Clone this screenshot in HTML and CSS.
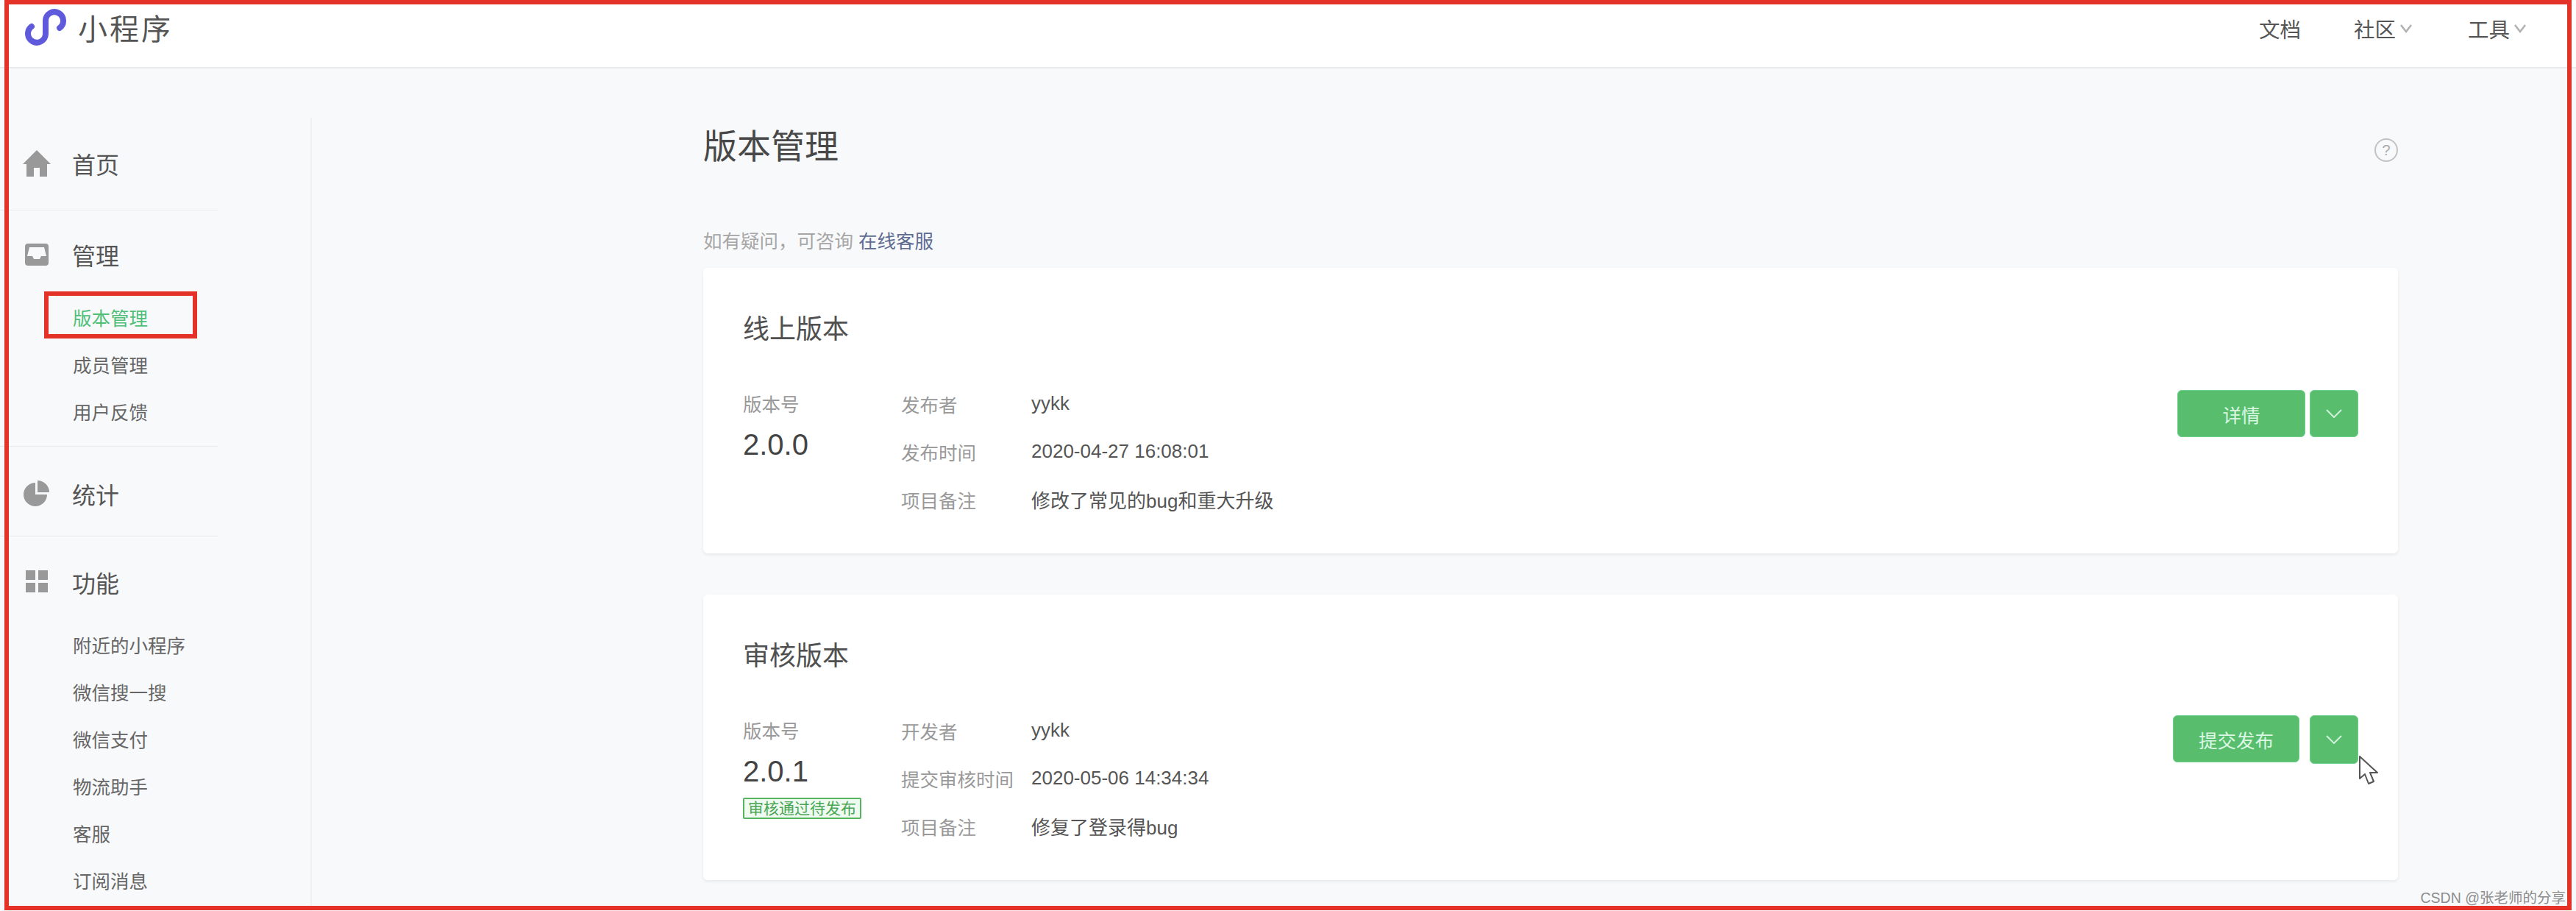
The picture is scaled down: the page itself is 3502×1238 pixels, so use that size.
FILE: index.html
```html
<!DOCTYPE html>
<html lang="zh-CN">
<head>
    <meta charset="UTF-8">
    <title>小程序 - 版本管理</title>
    <link rel="stylesheet" href="styles.css">
</head>
<body>
    <header class="header">
        <div class="brand">
            <svg class="brand-logo" viewBox="0 0 56 50" width="56" height="50">
                <path d="M9 24A12 12 0 1 0 28 34V16A12 12 0 1 1 47 26" fill="none" stroke="#5f59dc" stroke-width="8" stroke-linecap="round"/>
            </svg>
            <span class="brand-name">小程序</span>
        </div>
        <nav class="top-nav">
            <a class="top-link">文档</a>
            <a class="top-link">社区
                <svg class="top-caret" viewBox="0 0 16 12" width="16" height="12"><path d="M1 1l7 9 7-9" fill="none" stroke="#b0b0b0" stroke-width="2.5"/></svg>
            </a>
            <a class="top-link">工具
                <svg class="top-caret" viewBox="0 0 16 12" width="16" height="12"><path d="M1 1l7 9 7-9" fill="none" stroke="#b0b0b0" stroke-width="2.5"/></svg>
            </a>
        </nav>
    </header>

    <div class="layout">
        <aside class="sidebar">
            <div class="nav-group nav-group-first">
                <div class="nav-head">
                    <svg class="nav-icon" viewBox="0 0 38 36"><path d="M19 0L38 19H33V36H23V24H15V36H5V19H0Z" fill="#999"/></svg>
                    首页
                </div>
            </div>
            <div class="nav-group nav-group-sub">
                <div class="nav-head">
                    <svg class="nav-icon" viewBox="0 0 38 36"><path d="M7 3H31Q35 3 35 7V29Q35 33 31 33H7Q3 33 3 29V7Q3 3 7 3ZM9 8L6 20H13L15 24H23L25 20H32L29 8Z" fill="#999" fill-rule="evenodd"/></svg>
                    管理
                </div>
                <ul class="sub-list">
                    <li class="sub-item active">版本管理</li>
                    <li class="sub-item">成员管理</li>
                    <li class="sub-item">用户反馈</li>
                </ul>
            </div>
            <div class="nav-group nav-group-stats">
                <div class="nav-head">
                    <svg class="nav-icon" viewBox="0 0 38 36"><path d="M20 0A16 16 0 0 1 36 16H20ZM17 3V19H33A16 16 0 1 1 17 3Z" fill="#999"/></svg>
                    统计
                </div>
            </div>
            <div class="nav-group nav-group-last">
                <div class="nav-head">
                    <svg class="nav-icon" viewBox="0 0 38 36"><path d="M4 2H17V15H4ZM21 2H34V15H21ZM4 19H17V32H4ZM21 19H34V32H21Z" fill="#999"/></svg>
                    功能
                </div>
                <ul class="sub-list">
                    <li class="sub-item">附近的小程序</li>
                    <li class="sub-item">微信搜一搜</li>
                    <li class="sub-item">微信支付</li>
                    <li class="sub-item">物流助手</li>
                    <li class="sub-item">客服</li>
                    <li class="sub-item">订阅消息</li>
                </ul>
            </div>
        </aside>

        <main class="main">
            <div class="page-head">
                <h1 class="page-title">版本管理</h1>
                <span class="help">?</span>
            </div>
            <p class="hint">如有疑问，可咨询 <a class="hint-link">在线客服</a></p>

            <section class="card">
                <h2 class="card-title">线上版本</h2>
                <div class="card-body">
                    <div class="version">
                        <div class="version-label">版本号</div>
                        <div class="version-num">2.0.0</div>
                    </div>
                    <dl class="info">
                        <dt>发布者</dt><dd>yykk</dd>
                        <dt>发布时间</dt><dd>2020-04-27 16:08:01</dd>
                        <dt>项目备注</dt><dd>修改了常见的bug和重大升级</dd>
                    </dl>
                    <div class="actions">
                        <button class="btn btn-detail">详情</button>
                        <button class="btn btn-more">
                            <svg viewBox="0 0 22 12" width="22" height="12"><path d="M1 1l10 10L21 1" fill="none" stroke="#cff3da" stroke-width="2"/></svg>
                        </button>
                    </div>
                </div>
            </section>

            <section class="card">
                <h2 class="card-title">审核版本</h2>
                <div class="card-body">
                    <div class="version">
                        <div class="version-label">版本号</div>
                        <div class="version-num">2.0.1</div>
                        <span class="badge">审核通过待发布</span>
                    </div>
                    <dl class="info">
                        <dt>开发者</dt><dd>yykk</dd>
                        <dt>提交审核时间</dt><dd>2020-05-06 14:34:34</dd>
                        <dt>项目备注</dt><dd>修复了登录得bug</dd>
                    </dl>
                    <div class="actions actions-wide">
                        <button class="btn btn-submit">提交发布</button>
                        <button class="btn btn-more btn-more-tall">
                            <svg viewBox="0 0 22 12" width="22" height="12"><path d="M1 1l10 10L21 1" fill="none" stroke="#cff3da" stroke-width="2"/></svg>
                        </button>
                    </div>
                </div>
            </section>
        </main>
    </div>

    <!-- annotations drawn over the screenshot -->
    <div class="mark mark-page"></div>
    <div class="mark mark-item"></div>
    <svg class="cursor" viewBox="0 0 26 40" width="26" height="40">
        <path d="M1 1V31L8 25L13 38L20 35L15 23H25Z" fill="#fff" stroke="#555" stroke-width="2" stroke-linejoin="round"/>
    </svg>
    <div class="watermark">CSDN @张老师的分享</div>
</body>
</html>
```

FILE: styles.css
```css
* {
    box-sizing: border-box;
}

body {
    position: relative;
    width: 3502px;
    height: 1238px;
    margin: 0;
    overflow: hidden;
    font-family: "Liberation Sans", "Noto Sans CJK SC", sans-serif;
    font-size: 26px;
    color: #555;
    background-color: #f8f9fb;
}

.header {
    display: flex;
    justify-content: space-between;
    align-items: center;
    height: 93px;
    padding: 0 68px 14px 34px;
    background-color: #fff;
    border-bottom: 2px solid #e8e9ea;
}

.brand {
    display: flex;
    align-items: center;
    gap: 16px;
    margin-top: -4px;
}

.brand-name {
    font-size: 40px;
    letter-spacing: 3px;
    color: #555;
}

.top-nav {
    display: flex;
    align-items: center;
    gap: 76px;
}

.top-link {
    display: flex;
    align-items: center;
    gap: 6px;
    font-size: 28.5px;
    color: #555;
}

.top-link:first-child {
    margin-right: -4px;
}

.layout {
    display: flex;
    height: 1145px;
}

.sidebar {
    width: 424px;
    height: 1078px;
    margin-top: 67px;
    border-right: 2px solid #f0f1f3;
}

.nav-group {
    width: 296px;
    padding: 28px 0 24px;
    border-bottom: 1px solid #e9eaec;
}

.nav-group-first {
    padding: 30px 0 31px;
}

.nav-group-sub {
    padding-bottom: 13px;
}

.nav-group-stats {
    padding: 32px 0 25px;
}

.nav-group-last {
    padding-top: 30px;
    border-bottom: none;
}

.nav-head {
    display: flex;
    align-items: center;
    height: 64px;
    padding-left: 31px;
    font-size: 32px;
    color: #555;
}

.nav-icon {
    width: 38px;
    height: 36px;
    margin-right: 29px;
}

.sub-list {
    margin: 23px 0 0;
    padding: 0 0 0 99px;
    list-style: none;
}

.sub-item {
    height: 64px;
    line-height: 64px;
    font-size: 25.5px;
    white-space: nowrap;
    color: #666;
}

.sub-item.active {
    color: #4fbf78;
}

.main {
    width: 2304px;
    margin-left: 532px;
}

.page-head {
    display: flex;
    justify-content: space-between;
    align-items: center;
    height: 60px;
    margin-top: 72px;
}

.page-title {
    margin: 0;
    font-size: 46px;
    font-weight: 400;
    color: #484848;
}

.help {
    width: 32px;
    height: 32px;
    border: 2px solid #c2c2c2;
    border-radius: 50%;
    font-size: 20px;
    line-height: 28px;
    text-align: center;
    color: #aaa;
    transform: translate(0, 9px);
}

.hint {
    margin: 85px 0 0;
    height: 36px;
    line-height: 36px;
    font-size: 25.5px;
    color: #a6a6a6;
}

.hint-link {
    color: #5e6b92;
}

.card {
    height: 388px;
    margin: 18px 0 56px;
    padding: 54px 54px 0;
    background-color: #fff;
    border-radius: 6px;
    box-shadow: 0 2px 4px rgba(0, 0, 0, 0.07);
}

.card:last-child {
    margin-bottom: 0;
}

.card-title {
    margin: 0;
    height: 60px;
    line-height: 60px;
    font-size: 36px;
    font-weight: 400;
    color: #505050;
}

.card-body {
    display: flex;
    margin-top: 40px;
}

.version {
    width: 215px;
}

.version-label {
    height: 65px;
    line-height: 65px;
    font-size: 25.5px;
    color: #999;
}

.version-num {
    height: 42px;
    line-height: 42px;
    font-size: 40px;
    color: #444;
}

.badge {
    display: block;
    width: 161px;
    height: 29px;
    margin-top: 15px;
    border: 2px solid #56b45f;
    border-radius: 2px;
    background-color: #effaf0;
    font-size: 21px;
    line-height: 25px;
    text-align: center;
    white-space: nowrap;
    color: #4aa655;
}

.info {
    display: grid;
    grid-template-columns: 177px auto;
    grid-auto-rows: 65px;
    align-items: center;
    margin: -2px 0 0;
}

.info dt {
    font-size: 25.5px;
    white-space: nowrap;
    color: #999;
}

.info dd {
    margin: 0;
    font-size: 26px;
    color: #555;
}

.actions {
    display: flex;
    align-items: flex-start;
    gap: 6px;
    margin: 12px 0 0 auto;
}

.actions-wide {
    gap: 14px;
    margin-top: 10px;
}

.btn {
    height: 64px;
    padding: 0;
    border: 1px solid #6fd08a;
    border-radius: 6px;
    background-color: #58be6e;
    font-family: inherit;
    font-size: 25.5px;
    color: #dcf7e4;
}

.btn-detail {
    width: 174px;
}

.btn-submit {
    width: 172px;
}

.btn-more {
    display: flex;
    justify-content: center;
    align-items: center;
    width: 66px;
}

.btn-more-tall {
    height: 66px;
}

.mark {
    position: absolute;
    border: 6px solid #e53228;
}

.mark-page {
    left: 6px;
    top: 0;
    width: 3490px;
    height: 1237px;
}

.mark-item {
    left: 60px;
    top: 396px;
    width: 208px;
    height: 64px;
}

.cursor {
    position: absolute;
    left: 3207px;
    top: 1027px;
}

.watermark {
    position: absolute;
    right: 14px;
    top: 1206px;
    font-size: 19.5px;
    line-height: 28px;
    color: #8d8d8d;
}
```
